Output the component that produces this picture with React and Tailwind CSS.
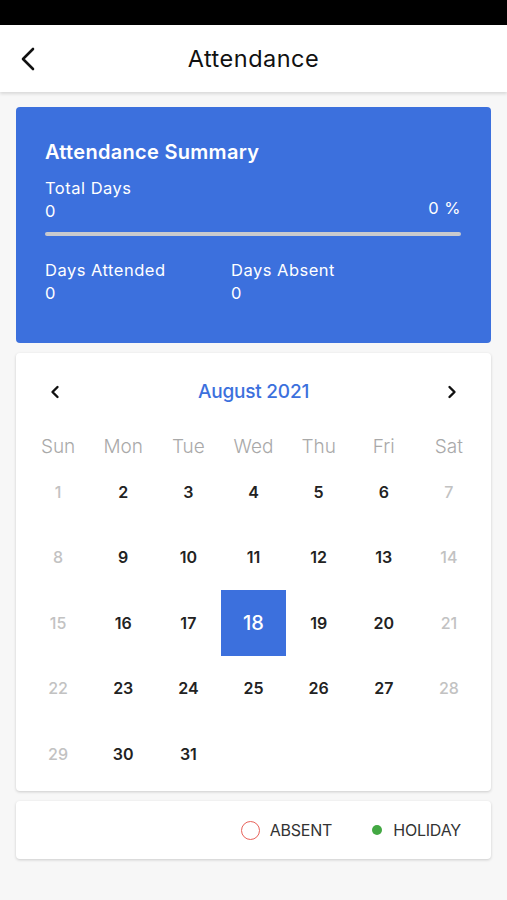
import React from "react";

const WEEK = ["Sun", "Mon", "Tue", "Wed", "Thu", "Fri", "Sat"];

export default function App() {
  // August 2021 starts on a Sunday
  const days = Array.from({ length: 31 }, (_, i) => i + 1);
  const selected = 18;

  return (
    <div className="w-[507px] h-[900px] bg-[#f7f7f7] flex flex-col font-['Inter',sans-serif]">
      <div className="h-[25px] bg-black" />

      {/* header */}
      <div className="h-[67px] bg-white shadow-[0_2px_3px_rgba(0,0,0,0.12)] flex items-center relative z-10">
        <button className="w-[56px] h-full flex items-center justify-center">
          <svg width="16" height="24" viewBox="0 0 16 24" fill="none">
            <path d="M13 2 L3 12 L13 22" stroke="#111" strokeWidth="2.6" strokeLinecap="round" strokeLinejoin="round" />
          </svg>
        </button>
        <div className="absolute left-0 right-0 top-[20px] text-center pointer-events-none text-[23.5px] leading-[28px] text-[#111] tracking-[0.5px]">
          Attendance
        </div>
      </div>

      <div className="px-[16px] pt-[15px] flex flex-col gap-[10px]">
        {/* summary */}
        <div className="h-[236px] bg-[#3c70dd] rounded-[4px] pl-[29px] pr-[30px] pt-[32px] text-white">
          <div className="text-[20px] font-semibold leading-[26px] tracking-[0.3px]">Attendance Summary</div>
          <div className="mt-[12px] text-[16.5px] leading-[22px] tracking-[0.5px]">Total Days</div>
          <div className="flex justify-between items-end text-[16.5px] leading-[22px]">
            <span className="mt-[1px]">0</span>
            <span className="relative -top-[3px] tracking-[0.5px]">0 %</span>
          </div>
          <div className="mt-[10px] h-[4px] rounded-full bg-[#c9cace]" />
          <div className="mt-[23px] flex text-[16.5px] leading-[23px] tracking-[0.5px]">
            <div className="w-[186px]">
              <div>Days Attended</div>
              <div>0</div>
            </div>
            <div>
              <div>Days Absent</div>
              <div>0</div>
            </div>
          </div>
        </div>

        {/* calendar */}
        <div className="h-[438px] bg-white rounded-[4px] shadow-[0_1px_3px_rgba(0,0,0,0.18)] pt-[12px] px-[9.5px]">
          <div className="h-[54px] flex items-center justify-between px-[23px]">
            <svg width="12" height="16" viewBox="0 0 12 16" fill="none">
              <path d="M8.5 3 L3.5 8 L8.5 13" stroke="#111" strokeWidth="2.4" strokeLinecap="round" strokeLinejoin="round" />
            </svg>
            <span className="text-[19px] font-medium text-[#3c70dd] tracking-[-0.2px]">August 2021</span>
            <svg width="12" height="16" viewBox="0 0 12 16" fill="none">
              <path d="M3.5 3 L8.5 8 L3.5 13" stroke="#111" strokeWidth="2.4" strokeLinecap="round" strokeLinejoin="round" />
            </svg>
          </div>
          <div className="mt-[14px] h-[26px] grid grid-cols-7 items-center">
            {WEEK.map((w) => (
              <div key={w} className="text-center text-[19px] font-light text-[#a9a9a9]">
                {w}
              </div>
            ))}
          </div>
          <div className="grid grid-cols-7 auto-rows-[65.5px]">
            {days.map((d, i) => {
              const weekend = i % 7 === 0 || i % 7 === 6;
              const isSel = d === selected;
              return (
                <div
                  key={d}
                  className={
                    isSel
                      ? "flex items-center justify-center bg-[#3c70dd] text-white text-[20px] font-medium"
                      : weekend
                      ? "flex items-center justify-center text-[16px] font-medium text-[#c2c2c2]"
                      : "flex items-center justify-center text-[16px] font-semibold text-[#222]"
                  }
                >
                  {d}
                </div>
              );
            })}
          </div>
        </div>

        {/* legend */}
        <div className="h-[58px] bg-white rounded-[4px] shadow-[0_1px_3px_rgba(0,0,0,0.18)] flex items-center justify-end pr-[30px]">
          <span className="w-[19px] h-[19px] rounded-full border-[1.5px] border-[#e8625a]" />
          <span className="ml-[10px] text-[16px] text-[#333] tracking-[-0.2px]">ABSENT</span>
          <span className="ml-[40px] w-[10px] h-[10px] rounded-full bg-[#43a843]" />
          <span className="ml-[11px] text-[16px] text-[#333] tracking-[-0.2px]">HOLIDAY</span>
        </div>
      </div>
    </div>
  );
}
